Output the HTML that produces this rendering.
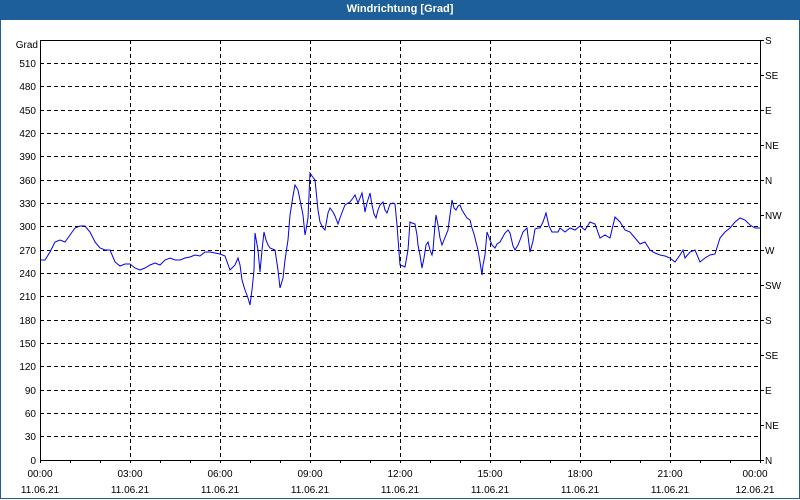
<!DOCTYPE html>
<html><head><style>
body{margin:0;width:800px;height:500px;background:#fff;font-family:"Liberation Sans",sans-serif;overflow:hidden}
.t{position:absolute;left:0;top:0;width:800px;height:20px;background:#1d5f98;color:#fff;font-weight:bold;font-size:11px;text-align:center;line-height:18px}
.frame{position:absolute;left:0;top:20px;width:798px;height:478px;border:1px solid #1d5f98;border-top:none}
</style></head><body>
<div class="t">Windrichtung [Grad]</div>
<div class="frame"></div>
<svg style="position:absolute;left:0;top:0" width="800" height="500" font-family="Liberation Sans" font-size="10" fill="#000">
<g stroke="#000" stroke-dasharray="4,3" stroke-width="1">
<line x1="40" y1="63.5" x2="760" y2="63.5"/><line x1="40" y1="86.5" x2="760" y2="86.5"/><line x1="40" y1="110.5" x2="760" y2="110.5"/><line x1="40" y1="133.5" x2="760" y2="133.5"/><line x1="40" y1="156.5" x2="760" y2="156.5"/><line x1="40" y1="180.5" x2="760" y2="180.5"/><line x1="40" y1="203.5" x2="760" y2="203.5"/><line x1="40" y1="226.5" x2="760" y2="226.5"/><line x1="40" y1="250.5" x2="760" y2="250.5"/><line x1="40" y1="273.5" x2="760" y2="273.5"/><line x1="40" y1="296.5" x2="760" y2="296.5"/><line x1="40" y1="320.5" x2="760" y2="320.5"/><line x1="40" y1="343.5" x2="760" y2="343.5"/><line x1="40" y1="366.5" x2="760" y2="366.5"/><line x1="40" y1="390.5" x2="760" y2="390.5"/><line x1="40" y1="413.5" x2="760" y2="413.5"/><line x1="40" y1="436.5" x2="760" y2="436.5"/>
<line x1="130.5" y1="40" x2="130.5" y2="460"/><line x1="220.5" y1="40" x2="220.5" y2="460"/><line x1="310.5" y1="40" x2="310.5" y2="460"/><line x1="400.5" y1="40" x2="400.5" y2="460"/><line x1="490.5" y1="40" x2="490.5" y2="460"/><line x1="580.5" y1="40" x2="580.5" y2="460"/><line x1="670.5" y1="40" x2="670.5" y2="460"/>
</g>
<g stroke="#000" stroke-width="1" fill="none">
<path d="M40.5 460.5V40.5H760.5V460.5H40.5"/>
<path d="M40.5 460v3M70.5 460v3M100.5 460v3M130.5 460v3M160.5 460v3M190.5 460v3M220.5 460v3M250.5 460v3M280.5 460v3M310.5 460v3M340.5 460v3M370.5 460v3M400.5 460v3M430.5 460v3M460.5 460v3M490.5 460v3M520.5 460v3M550.5 460v3M580.5 460v3M610.5 460v3M640.5 460v3M670.5 460v3M700.5 460v3M730.5 460v3M760.5 460v3"/>
<path d="M760 40.5h4M760 75.5h4M760 110.5h4M760 145.5h4M760 180.5h4M760 215.5h4M760 250.5h4M760 285.5h4M760 320.5h4M760 355.5h4M760 390.5h4M760 425.5h4M760 460.5h4"/>
</g>
<g text-anchor="end">
<text x="38" y="48">Grad</text>
<text x="36" y="67">510</text><text x="36" y="90">480</text><text x="36" y="114">450</text><text x="36" y="137">420</text><text x="36" y="160">390</text><text x="36" y="184">360</text><text x="36" y="207">330</text><text x="36" y="230">300</text><text x="36" y="254">270</text><text x="36" y="277">240</text><text x="36" y="300">210</text><text x="36" y="324">180</text><text x="36" y="347">150</text><text x="36" y="370">120</text><text x="36" y="394">90</text><text x="36" y="417">60</text><text x="36" y="440">30</text><text x="36" y="464">0</text>
</g>
<g>
<text x="765" y="44">S</text><text x="765" y="79">SE</text><text x="765" y="114">E</text><text x="765" y="149">NE</text><text x="765" y="184">N</text><text x="765" y="219">NW</text><text x="765" y="254">W</text><text x="765" y="289">SW</text><text x="765" y="324">S</text><text x="765" y="359">SE</text><text x="765" y="394">E</text><text x="765" y="429">NE</text><text x="765" y="464">N</text>
</g>
<g text-anchor="middle">
<text x="40" y="477">00:00</text><text x="130" y="477">03:00</text><text x="220" y="477">06:00</text><text x="310" y="477">09:00</text><text x="400" y="477">12:00</text><text x="490" y="477">15:00</text><text x="580" y="477">18:00</text><text x="670" y="477">21:00</text><text x="755" y="477">00:00</text>
<text x="40" y="493">11.06.21</text><text x="130" y="493">11.06.21</text><text x="220" y="493">11.06.21</text><text x="310" y="493">11.06.21</text><text x="400" y="493">11.06.21</text><text x="490" y="493">11.06.21</text><text x="580" y="493">11.06.21</text><text x="670" y="493">11.06.21</text><text x="755" y="493">12.06.21</text>
</g>
<polyline fill="none" stroke="#0000ee" stroke-width="1" points="40,260 45,260 50,252 55,242 60,240 65,242 70,235 75,228 80,226 85,226 90,232 95,242 100,248 105,250 110,250 115,262 120,266 125,264 130,264 135,268 140,270 145,268 150,265 155,263 160,265 165,260 170,258 175,260 180,260 185,258 190,257 195,255 200,256 205,252 210,252 215,253 220,254 225,256 230,270 235,265 238,258 240,265 242,280 245,290 248,298 250,305 252,290 254,270 255,233 258,250 260,272 262,250 264,232 266,240 268,245 270,248 275,250 278,270 280,288 283,278 285,260 288,240 290,215 293,196 295,185 298,190 300,200 303,215 305,235 306,230 308,218 310,173 312,176 315,180 318,210 320,222 323,228 325,230 328,213 330,208 333,212 335,216 338,224 340,218 343,210 345,205 348,203 350,202 353,198 355,195 358,203 360,198 362,193 364,205 365,212 367,203 370,193 372,205 374,214 376,218 378,210 380,205 383,202 385,210 387,213 390,204 393,203 395,204 397,225 400,265 403,266 405,267 408,250 410,222 412,223 415,224 417,235 418,245 420,255 422,268 424,258 426,245 428,242 430,250 432,255 433,250 435,225 436,215 438,225 440,238 442,245 444,240 448,230 450,215 452,200 454,208 456,210 458,206 460,205 462,210 465,215 467,218 470,220 472,228 474,234 478,250 480,262 482,275 483,265 485,255 487,232 490,240 492,245 495,248 497,244 500,242 505,233 508,230 510,233 513,246 515,250 518,245 520,240 523,232 527,228 530,252 533,241 535,229 538,228 540,228 543,222 546,213 549,226 552,232 555,232 558,232 560,228 565,232 570,228 575,230 580,226 585,230 590,222 595,224 600,238 605,235 610,238 615,217 620,222 625,230 630,232 635,238 640,244 645,242 650,250 655,253 660,255 665,256 670,258 675,262 680,255 683,250 685,258 690,252 695,250 700,262 705,258 710,255 715,254 720,238 725,232 730,228 735,222 740,218 745,220 750,225 755,228 760,228"/>
</svg>
</body></html>
